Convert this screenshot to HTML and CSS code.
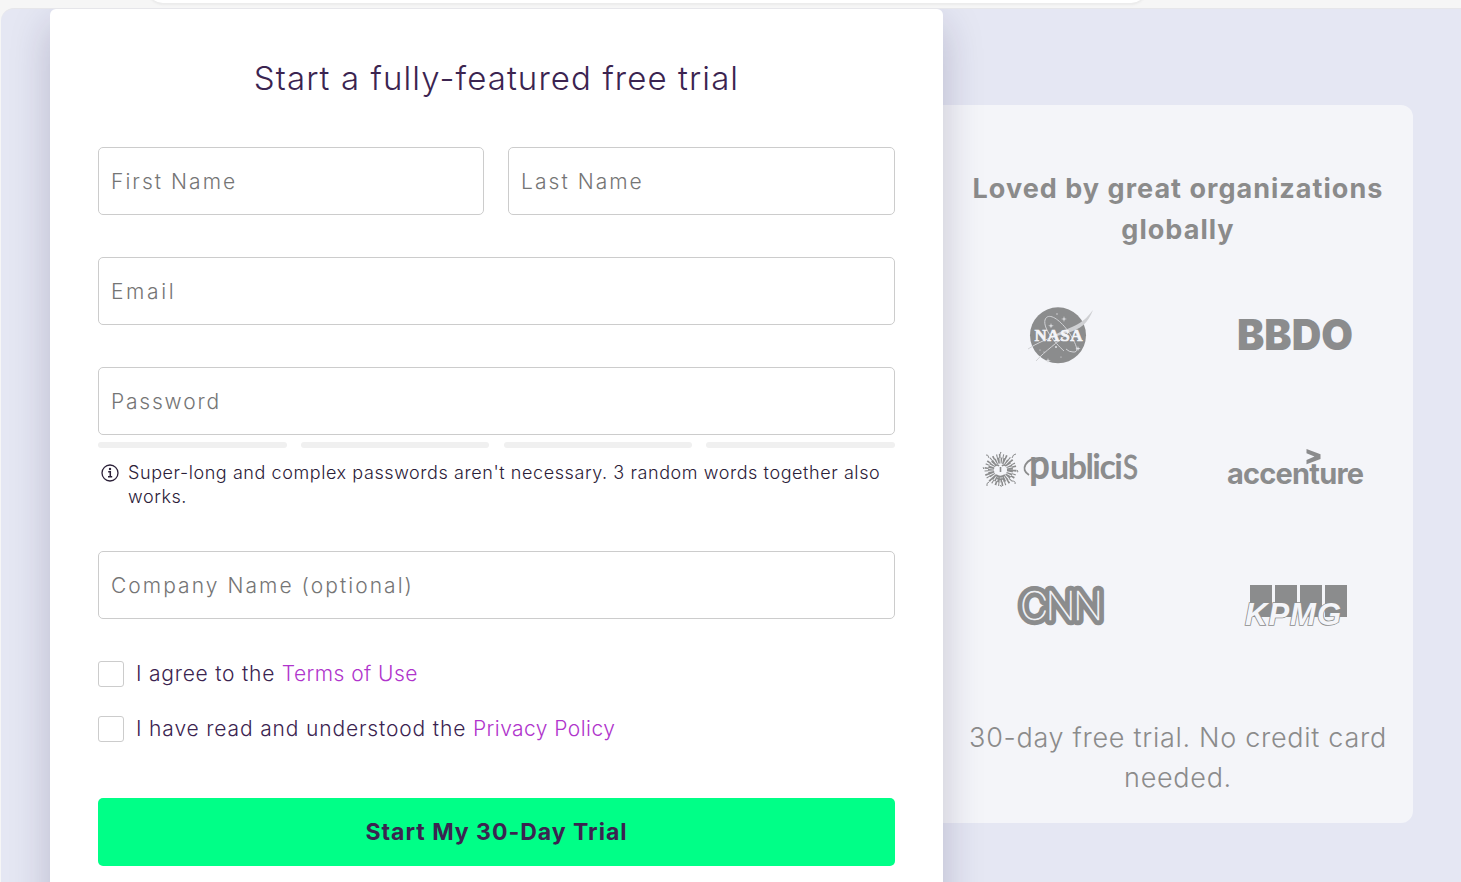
FILE: index.html
```html
<!DOCTYPE html>
<html lang="en">
<head>
    <meta charset="UTF-8">
    <meta name="viewport" content="width=device-width, initial-scale=1.0">
    <title>Start a free trial</title>
    <link rel="stylesheet" href="styles.css">
</head>
<body>
    <div class="browser-bar">
        <div class="address-bar"></div>
    </div>
    <main class="page">
        <form class="card">
            <h1>Start a fully-featured free trial</h1>
            <div class="row">
                <input class="first-name" type="text" placeholder="First Name">
                <input class="last-name" type="text" placeholder="Last Name">
            </div>
            <input class="email" type="email" placeholder="Email">
            <input class="password" type="password" placeholder="Password">
            <div class="strength">
                <span></span><span></span><span></span><span></span>
            </div>
            <div class="hint">
                <svg class="info-icon" width="18" height="18" viewBox="0 0 18 18">
                    <circle cx="9" cy="9" r="8" fill="none" stroke="currentColor" stroke-width="1.3"/>
                    <circle cx="9" cy="5" r="1.2" fill="currentColor"/>
                    <path d="M7.2 7.8H9.3V12.6M7 12.8H11.2" fill="none" stroke="currentColor" stroke-width="1.5"/>
                </svg>
                <p>Super-long and complex passwords aren't necessary. 3 random words together also<br>works.</p>
            </div>
            <input class="company" type="text" placeholder="Company Name (optional)">
            <label class="check">
                <input type="checkbox">
                <span class="terms">I agree to the <a href="#">Terms of Use</a></span>
            </label>
            <label class="check">
                <input type="checkbox">
                <span class="privacy">I have read and understood the <a href="#">Privacy Policy</a></span>
            </label>
            <button type="submit">Start My 30-Day Trial</button>
        </form>

        <aside class="panel">
            <h2>Loved by great organizations<br>globally</h2>
            <div class="logos">
                <!-- NASA -->
                <svg viewBox="0 0 235 135">
                    <circle cx="115" cy="67.3" r="28"/>
                    <g fill="none" stroke="#d2d3d6" stroke-width="1">
                        <path d="M113 68C104 71 94 75 85 81"/>
                        <path d="M93 93C103 82 113 76 126 64"/>
                        <path d="M121 83C111 74 100 60 102 52C105 43 118 52 127 66C133 76 137 85 130 84Q126 84 123 81"/>
                    </g>
                    <path fill="#cfd0d3" d="M150 42C145 55 138 61 124 65C117 67 109 69 103 72C117 63 128 60 135 56C142 52 146 47 150 42Z"/>
                    <g fill="#e3e4e7">
                        <path d="M121 48l.6 2.4 2.4.6-2.4.6-.6 2.4-.6-2.4-2.4-.6 2.4-.6zM108 55l.6 2.2 2.2.6-2.2.6-.6 2.2-.6-2.2-2.2-.6 2.2-.6zM105 90l.6 2.2 2.2.6-2.2.6-.6 2.2-.6-2.2-2.2-.6 2.2-.6zM135 78l.6 2 2 .6-2 .6-.6 2-.6-2-2-.6 2-.6z"/>
                        <circle cx="114" cy="46" r=".7"/><circle cx="113" cy="79" r="1"/><circle cx="97" cy="82" r=".6"/><circle cx="101" cy="84" r=".6"/><circle cx="118" cy="89" r=".6"/>
                    </g>
                    <text class="nasa" x="91.5" y="73.3" textLength="48">NASA</text>
                </svg>
                <!-- BBDO -->
                <svg viewBox="0 0 235 135">
                    <text class="bbdo" x="59" y="82" textLength="116" lengthAdjust="spacingAndGlyphs">BBDO</text>
                </svg>
                <!-- Publicis -->
                <svg viewBox="0 0 235 135">
                    <g fill="none" stroke="#8b8c8d">
                        <circle cx="57.5" cy="67" r="14" stroke-width="4" stroke-dasharray="1.6 2.3 1 1.5"/>
                        <circle cx="57.5" cy="67" r="9.5" stroke-width="6" stroke-dasharray="2 1 1.4 .8"/>
                        <path stroke-width="1" d="M57 51q2-3 0-1M46 55q-1-4-3-3M69 55q1-4 4-4M41 66q-2-2 0-1M74 67q2 2 0 2M46 79q-3 1-2 4M57 82q2 2 1 2M69 78q4 0 3 3"/>
                        <path stroke-width="1.6" d="M52 63q2-2 4 0M59 63q2-2 4 0M57.5 64v5M53 72q4 3 9 0M54 75q4 3 7 0"/>
                        <path stroke-width="2" d="M86 72C77 67 82 55 97 55"/>
                    </g>
                    <text class="publicis-p" x="86" y="75.5" textLength="21" lengthAdjust="spacingAndGlyphs">p</text>
                    <text class="publicis" x="107" y="76" textLength="73">ublici</text>
                    <text class="publicis-s" x="180" y="76" textLength="15" lengthAdjust="spacingAndGlyphs">S</text>
                </svg>
                <!-- Accenture -->
                <svg viewBox="0 0 235 135">
                    <path d="M128.5 46L142.5 51.3V56L128.5 61.3V57L136.5 53.6L128.5 50.3Z"/>
                    <text class="accenture" x="49" y="81" textLength="137">accenture</text>
                </svg>
                <!-- CNN -->
                <svg viewBox="0 0 235 135">
                    <text class="cnn" x="77" y="82" textLength="83">CNN</text>
                    <text class="cnn-line" x="77" y="82" textLength="83" aria-hidden="true">CNN</text>
                </svg>
                <!-- KPMG -->
                <svg viewBox="0 0 235 135">
                    <path d="M72 47h22v32h-22zM97 47h22v32h-22zM122 47h22v32h-22zM147 47h22v32h-22z"/>
                    <text class="kpmg" x="67" y="87" textLength="96">KPMG</text>
                </svg>
            </div>
            <p class="note">30-day free trial. No credit card<br>needed.</p>
        </aside>
    </main>
</body>
</html>
```
FILE: styles.css
```css
* {
    box-sizing: border-box;
}
body {
    margin: 0;
    height: 882px;
    overflow: hidden;
    background-color: #f6f6f6;
    font-family: Inter, "Open Sans", sans-serif;
    font-weight: 300;
    color: #3b2450;
}
.browser-bar {
    height: 8px;
    overflow: hidden;
}
.address-bar {
    width: 1000px;
    height: 33px;
    margin: -30px 0 0 147px;
    background-color: #fff;
    border-radius: 16px;
    box-shadow: 0 2px 2px #ebebeb;
}
.page {
    display: flex;
    align-items: flex-start;
    height: 890px;
    margin-left: 1px;
    padding-left: 49px;
    border-top: 1px solid #e6e6ea;
    border-top-left-radius: 13px;
    background-color: #e5e7f3;
    overflow: hidden;
}
.card {
    position: relative;
    z-index: 1;
    width: 893px;
    height: 940px;
    padding: 45px 48px;
    background-color: #fff;
    border-radius: 6px;
    box-shadow: 0 16px 40px rgba(30, 25, 75, 0.22);
}
h1 {
    margin: 0 0 45px;
    font-size: 33px;
    line-height: 48px;
    font-weight: 300;
    text-align: center;
    letter-spacing: 1.1px;
    white-space: nowrap;
}
.row {
    display: grid;
    grid-template-columns: 386px 387px;
    gap: 24px;
}
input {
    display: block;
    width: 100%;
    height: 68px;
    margin: 0 0 42px;
    padding: 0 12px;
    border: 1px solid #ccc;
    border-radius: 5px;
    background-color: #fff;
    font-family: inherit;
    font-weight: 300;
    font-size: 21px;
    letter-spacing: 2.05px;
}
input::placeholder {
    color: #757575;
}
.email {
    letter-spacing: 2.6px;
}
.password {
    margin-bottom: 7px;
    letter-spacing: 1.8px;
}
.strength {
    display: grid;
    grid-template-columns: repeat(4, 1fr);
    gap: 14.3px;
}
.strength span {
    height: 6px;
    border-radius: 3px;
    background-color: #f0f0f0;
}
.hint {
    display: flex;
    gap: 9px;
    height: 103px;
    padding: 13px 0 0 3px;
    font-size: 18px;
    line-height: 24px;
    letter-spacing: 0.58px;
    color: #2b2038;
}
.hint p {
    margin: 0;
    white-space: nowrap;
}
.info-icon {
    flex: none;
    margin-top: 3px;
}
.check {
    display: flex;
    align-items: center;
    gap: 12px;
    height: 26px;
    margin-bottom: 29px;
    font-size: 21px;
    line-height: 24px;
    white-space: nowrap;
}
.terms {
    letter-spacing: 0.77px;
}
.privacy {
    letter-spacing: 0.85px;
}
.check input {
    flex: none;
    width: 26px;
    height: 26px;
    margin: 0;
    padding: 0;
    appearance: none;
    border-radius: 3px;
}
.check a {
    color: #b035cc;
    letter-spacing: 0.45px;
    text-decoration: none;
}
button {
    width: 100%;
    height: 68px;
    margin-top: 27px;
    padding: 0;
    border: 0;
    border-radius: 5px;
    background-color: #00ff87;
    color: #3b2450;
    font-family: inherit;
    font-size: 23px;
    font-weight: 700;
    letter-spacing: 1px;
}
.panel {
    width: 470px;
    height: 718px;
    margin-top: 96px;
    padding-top: 63px;
    border-radius: 0 12px 12px 0;
    background-color: #f4f5f9;
    color: #8b8b8b;
    text-align: center;
    white-space: nowrap;
}
h2 {
    margin: 0;
    font-size: 27px;
    line-height: 41px;
    font-weight: 700;
    letter-spacing: 1.03px;
}
.logos {
    display: grid;
    grid-template-columns: 235px 235px;
    grid-auto-rows: 135px;
    margin-top: 18px;
    fill: #8b8c8d;
}
.logos svg {
    width: 235px;
    height: 135px;
}
.nasa {
    font: 700 17px "Liberation Serif", serif;
    fill: #f4f5f9;
    stroke: #f4f5f9;
    stroke-width: 0.6;
}
.bbdo {
    font: 900 42px Inter, sans-serif;
}
.publicis-p {
    font: 700 42px Lato, sans-serif;
}
.publicis {
    font: 700 34px Lato, sans-serif;
}
.publicis-s {
    font: 400 32px Lato, sans-serif;
    stroke: #8b8c8d;
    stroke-width: 0.8;
}
.accenture {
    font: 700 29px Inter, sans-serif;
}
.cnn,
.cnn-line {
    font: 100 39px Inter, sans-serif;
}
.cnn {
    stroke: #8b8c8d;
    stroke-width: 10.5px;
    stroke-linejoin: round;
}
.cnn-line {
    fill: #f4f5f9;
    stroke: #f4f5f9;
    stroke-width: 0.6px;
}
.kpmg {
    font: italic 700 31px "Liberation Sans", sans-serif;
    fill: #f4f5f9;
    stroke: #8b8c8d;
    stroke-width: 1.6px;
    paint-order: stroke;
}
.note {
    margin: 45px 0 0;
    font-size: 27px;
    line-height: 40px;
    font-weight: 300;
    letter-spacing: 0.7px;
}
```
